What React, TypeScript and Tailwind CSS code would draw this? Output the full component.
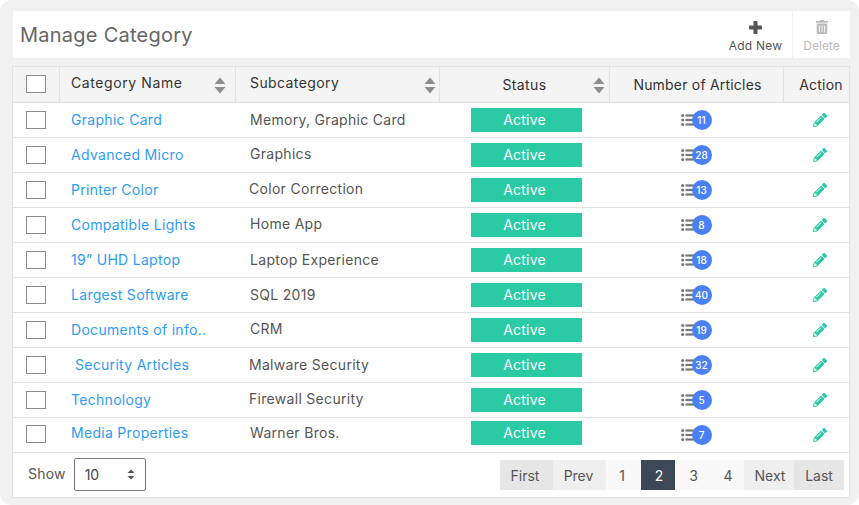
import { FaPencilAlt, FaTrashAlt } from "react-icons/fa";

type Row = { name: string; sub: string; count: number; subX?: string; nameX?: string; subY?: string };

const rows: Row[] = [
  { name: "Graphic Card", sub: "Memory, Graphic Card", count: 11 },
  { name: "Advanced Micro", sub: "Graphics", count: 28, subY: "-translate-y-[2px]" },
  { name: "Printer Color", sub: "Color Correction", count: 13, subX: "pl-[13px]", subY: "-translate-y-[2px]" },
  { name: "Compatible Lights", sub: "Home App", count: 8, subY: "-translate-y-[2px]" },
  { name: "19” UHD Laptop", sub: "Laptop Experience", count: 18 },
  { name: "Largest Software", sub: "SQL 2019", count: 40 },
  { name: "Documents of info..", sub: "CRM", count: 19, subY: "-translate-y-[2px]" },
  { name: "Security Articles", sub: "Malware Security", count: 32, subX: "pl-[13px]", nameX: "pl-[15px]" },
  { name: "Technology", sub: "Firewall Security", count: 5, subX: "pl-[13px]", subY: "-translate-y-[2px]" },
  { name: "Media Properties", sub: "Warner Bros.", count: 7, subY: "-translate-y-[3px]" },
];

const cols = "grid grid-cols-[47px_176px_204px_170px_174px_66px]";

function Sort() {
  return (
    <svg width="12" height="17" viewBox="0 0 12 17" className="shrink-0 fill-[#8d8d8d]">
      <path d="M6 0.5 11.5 7H0.5Z" />
      <path d="M0.5 10H11.5L6 16.5Z" />
    </svg>
  );
}

function ListIcon() {
  return (
    <svg width="14" height="14" viewBox="0 0 14 14" className="fill-[#777]">
      <circle cx="1.7" cy="2.5" r="1.6" />
      <circle cx="1.7" cy="7" r="1.6" />
      <circle cx="1.7" cy="11.5" r="1.6" />
      <rect x="4.5" y="1.4" width="9.5" height="2.2" />
      <rect x="4.5" y="5.9" width="9.5" height="2.2" />
      <rect x="4.5" y="10.4" width="9.5" height="2.2" />
    </svg>
  );
}

function Checkbox({ className = "" }: { className?: string }) {
  return <span className={`block h-[18px] w-5 border border-[#8a8a8a] bg-white ${className}`} />;
}

function HeadCell({
  label,
  sort,
  className = "",
  textClass = "",
}: {
  label: string;
  sort?: string;
  className?: string;
  textClass?: string;
}) {
  return (
    <div className={`relative flex h-[35px] items-center border-r border-[#e3e3e3] ${className}`}>
      <span className={`text-[#333] ${textClass}`}>{label}</span>
      {sort && (
        <span className={`absolute top-[10px] ${sort}`}>
          <Sort />
        </span>
      )}
    </div>
  );
}

function PageBtn({ label, className }: { label: string; className: string }) {
  return <span className={`flex h-[30px] items-center justify-center text-[14px] ${className}`}>{label}</span>;
}

export default function App() {
  return (
    <div
      className="h-[505px] w-[859px] overflow-hidden rounded-[12px] bg-[#f1f1f1] pl-[12px] pr-[8px] pt-[11px] text-[14px] text-[#555]"
      style={{ fontFamily: "Inter, 'Noto Sans', sans-serif" }}
    >
      <div className="ml-px flex h-[47px] w-[837px] items-stretch justify-between bg-white">
        <h1 className="pl-[7px] pt-[11px] text-[20px] leading-[26px] tracking-[0.25px] text-[#666]">Manage Category</h1>
        <div className="flex">
          <div className="flex w-[79px] flex-col items-center pl-[6px] pt-[10px] text-[#555]">
            <svg width="13" height="13" viewBox="0 0 13 13" className="mb-[2px] fill-[#555]">
              <rect x="4.5" y="0" width="4" height="13" rx="0.8" />
              <rect x="0" y="4.5" width="13" height="4" rx="0.8" />
            </svg>
            <span className="text-[12px] leading-[20px] tracking-[0.2px]">Add New</span>
          </div>
          <div className="flex w-[58px] flex-col items-center border-l border-[#f0f0f0] pt-[9px] text-[#bbb]">
            <FaTrashAlt className="mb-[2px] text-[14px]" />
            <span className="text-[12px] leading-[20px]">Delete</span>
          </div>
        </div>
      </div>

      <div className="mt-[8px] h-[432px] w-[838px] border border-[#e2e2e2] bg-white">
        <div className={`${cols} border-b border-[#dedede] bg-[#f4f4f4] text-[14px]`}>
          <div className="flex h-[35px] items-center justify-center border-r border-[#e3e3e3] pr-px">
            <Checkbox className="-translate-y-px" />
          </div>
          <HeadCell label="Category Name" sort="right-[9px]" className="pl-[11px]" textClass="-translate-y-[2px] tracking-[0.6px]" />
          <HeadCell label="Subcategory" sort="right-[3px]" className="pl-[14px]" textClass="-translate-y-[2px] tracking-[0.4px]" />
          <HeadCell label="Status" sort="right-[4px]" className="justify-center" textClass="tracking-[0.4px]" />
          <HeadCell label="Number of Articles" className="justify-center pl-[2px]" textClass="tracking-[0.2px]" />
          <HeadCell label="Action" className="justify-center border-r-0 pl-[8px]" textClass="tracking-[0.2px]" />
        </div>

        {rows.map((r, i) => (
          <div key={r.name} className={`${cols} h-[35px] border-b border-[#e2e2e2] text-[14px]`}>
            <div className="flex items-center justify-center pr-px">
              <Checkbox className={i === 9 ? "-translate-y-px" : ""} />
            </div>
            <div
              className={`flex items-center tracking-[0.3px] text-[#2d9cf4] ${r.nameX ?? "pl-[11px]"} ${
                i === 9 ? "-translate-y-[3px]" : "-translate-y-px"
              }`}
            >
              {r.name}
            </div>
            <div className={`flex items-center tracking-[0.3px] ${r.subX ?? "pl-[14px]"} ${r.subY ?? "-translate-y-px"}`}>
              {r.sub}
            </div>
            <div className="flex items-center pl-[31px]">
              <span
                className={`flex h-[24px] w-[111px] items-center justify-center bg-[#2acba4] pr-[4px] tracking-[0.2px] text-white ${
                  i === 9 ? "-translate-y-[2px]" : ""
                }`}
              >
                <span className="-translate-y-px">Active</span>
              </span>
            </div>
            <div className="flex items-center justify-center pr-[2px]">
              <span className="flex items-center">
                <ListIcon />
                <span className="relative -ml-[3px] flex h-[20px] w-[20px] items-center justify-center rounded-full bg-[#4a80f8] text-[10px] font-medium text-white">
                  {r.count}
                </span>
              </span>
            </div>
            <div className="flex items-center justify-center pl-[5px]">
              <FaPencilAlt className="text-[14px] text-[#2acba4]" />
            </div>
          </div>
        ))}

        <div className="flex h-[44px] items-center justify-between pl-[15px] pr-[5px]">
          <div className="flex -translate-y-px items-center gap-[8px]">
            <span className="-translate-y-px tracking-[0.2px]">Show</span>
            <span className="flex h-[33px] w-[72px] items-center justify-between rounded-[2px] border border-[#777] px-[10px] text-[#444]">
              10
              <svg width="8" height="11" viewBox="0 0 8 11" className="fill-[#555]">
                <path d="M4 0.5 7.5 4H0.5Z" />
                <path d="M0.5 7H7.5L4 10.5Z" />
              </svg>
            </span>
          </div>
          <div className="flex">
            <PageBtn label="First" className="w-[53px] bg-[#e6e6e6] pt-px pr-[3px]" />
            <PageBtn label="Prev" className="w-[53px] bg-[#efefef] pr-[2px]" />
            <PageBtn label="1" className="w-[35px] bg-[#f9f9f9] pr-[3px]" />
            <PageBtn label="2" className="w-[34px] bg-[#3c4858] pl-[2px] text-white" />
            <PageBtn label="3" className="w-[35px] bg-[#f9f9f9] pl-[2px]" />
            <PageBtn label="4" className="w-[34px] bg-[#f9f9f9] pl-[2px]" />
            <PageBtn label="Next" className="w-[50px] bg-[#efefef] pl-[2px]" />
            <PageBtn label="Last" className="w-[50px] bg-[#e6e6e6]" />
          </div>
        </div>
      </div>
    </div>
  );
}
